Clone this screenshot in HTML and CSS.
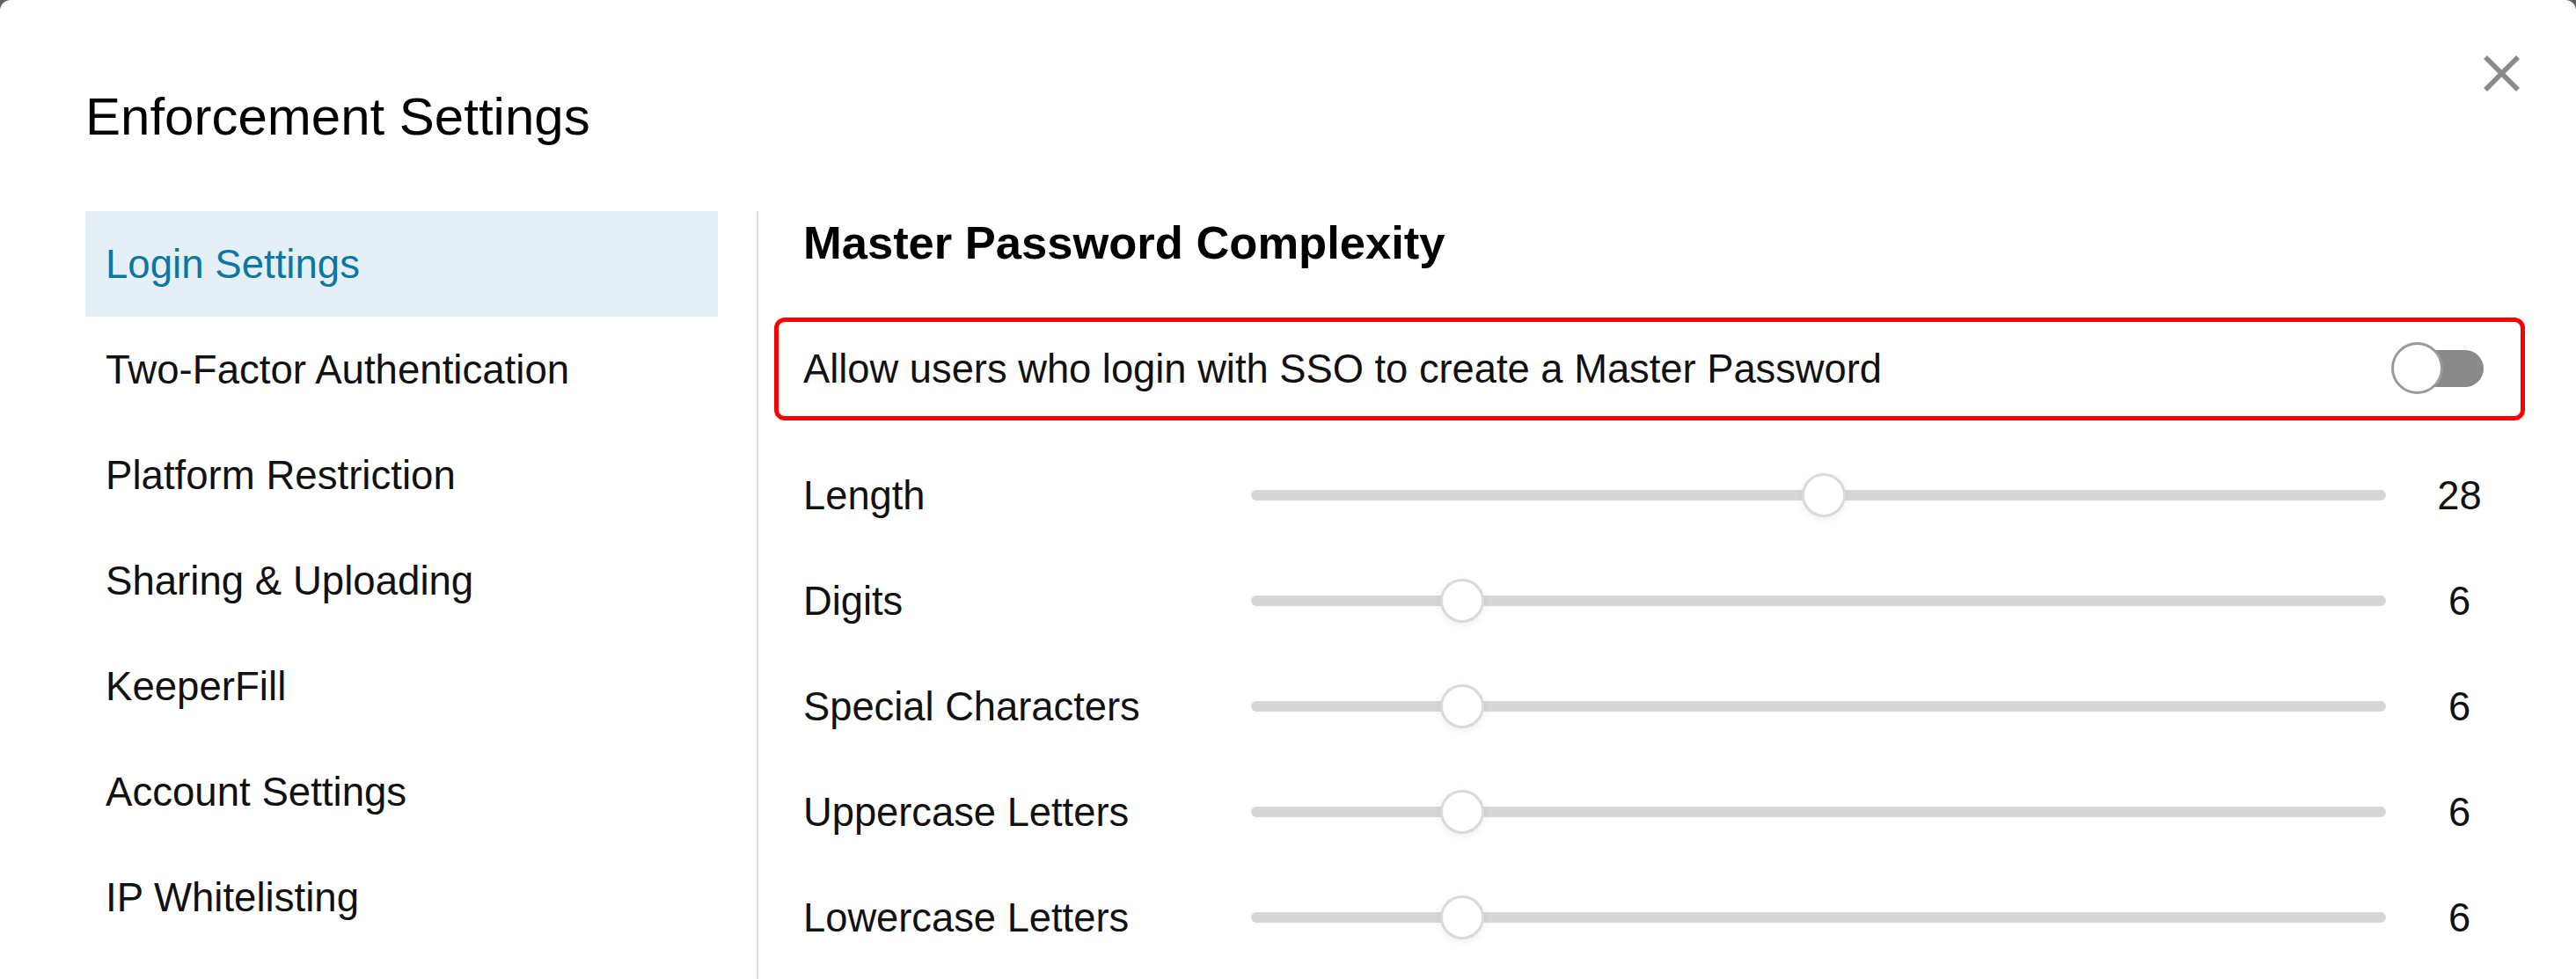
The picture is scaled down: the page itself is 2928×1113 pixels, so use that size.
FILE: index.html
```html
<!DOCTYPE html>
<html lang="en">
<head>
<meta charset="utf-8">
<title>Enforcement Settings</title>
<link rel="stylesheet" href="styles.css">
</head>
<body>
<div class="dialog">
  <button class="close" aria-label="Close">
    <svg viewBox="0 0 41 41" width="41" height="41"><line x1="2" y1="2" x2="39" y2="39"/><line x1="39" y1="2" x2="2" y2="39"/></svg>
  </button>
  <h1 class="title">Enforcement Settings</h1>
  <div class="main">
    <nav class="nav">
      <div class="nav-item active">Login Settings</div>
      <div class="nav-item">Two-Factor Authentication</div>
      <div class="nav-item">Platform Restriction</div>
      <div class="nav-item">Sharing &amp; Uploading</div>
      <div class="nav-item">KeeperFill</div>
      <div class="nav-item">Account Settings</div>
      <div class="nav-item">IP Whitelisting</div>
    </nav>
    <div class="divider"></div>
    <section class="panel">
      <h2 class="heading">Master Password Complexity</h2>
      <div class="sso-row">
        <span class="sso-label">Allow users who login with SSO to create a Master Password</span>
        <span class="toggle"><span class="toggle-track"></span><span class="toggle-knob"></span></span>
      </div>
      <div class="slider-row">
        <span class="label">Length</span>
        <span class="track"><span class="thumb" style="left: 50.5%"></span></span>
        <span class="value">28</span>
      </div>
      <div class="slider-row">
        <span class="label">Digits</span>
        <span class="track"><span class="thumb" style="left: 18.6%"></span></span>
        <span class="value">6</span>
      </div>
      <div class="slider-row">
        <span class="label">Special Characters</span>
        <span class="track"><span class="thumb" style="left: 18.6%"></span></span>
        <span class="value">6</span>
      </div>
      <div class="slider-row">
        <span class="label">Uppercase Letters</span>
        <span class="track"><span class="thumb" style="left: 18.6%"></span></span>
        <span class="value">6</span>
      </div>
      <div class="slider-row">
        <span class="label">Lowercase Letters</span>
        <span class="track"><span class="thumb" style="left: 18.6%"></span></span>
        <span class="value">6</span>
      </div>
    </section>
  </div>
</div>
</body>
</html>
```
FILE: styles.css
```css
* { box-sizing: border-box; }
html, body {
  margin: 0;
  padding: 0;
  background: #5e5e5e;
  overflow: hidden;
}
body {
  font-family: "Liberation Sans", Arial, Helvetica, sans-serif;
  color: #111;
}
.dialog {
  position: relative;
  width: 2928px;
  height: 1113px;
  background: #fff;
  border-radius: 12px 12px 0 0;
  overflow: hidden;
}
.close {
  position: absolute;
  left: 2823px;
  top: 63px;
  width: 41px;
  height: 41px;
  padding: 0;
  border: 0;
  background: none;
}
.close svg { display: block; }
.close line {
  stroke: #8a8a8a;
  stroke-width: 5.6;
}
.title {
  margin: 0;
  padding: 103px 0 0 97px;
  font-size: 60px;
  line-height: 59px;
  font-weight: 400;
  color: #000;
}
.main {
  display: flex;
  margin-top: 78px;
  height: 873px;
}
.nav {
  width: 719px;
  margin-left: 97px;
  display: flex;
  flex-direction: column;
}
.nav-item {
  height: 120px;
  display: flex;
  align-items: center;
  padding-left: 23px;
  font-size: 45.6px;
  line-height: 45px;
  color: #111;
}
.nav-item.active {
  background: #e4f0f6;
  color: #0b77a3;
}
.divider {
  width: 2px;
  margin-left: 44px;
  background: #dedede;
}
.panel {
  flex: 1;
  padding: 10px 0 0 18px;
}
.heading {
  margin: 0;
  padding-left: 33px;
  font-size: 52.5px;
  line-height: 52px;
  font-weight: 700;
  color: #000;
}
.sso-row {
  margin-top: 59px;
  width: 1990px;
  height: 117px;
  border: 5px solid #ff0000;
  border-radius: 12px;
  display: flex;
  align-items: center;
  justify-content: space-between;
  padding: 0 42px 0 28px;
}
.sso-label {
  font-size: 45.3px;
  line-height: 45px;
  color: #111;
}
.toggle {
  position: relative;
  width: 105px;
  height: 59px;
  margin-top: -2px;
}
.toggle-track {
  position: absolute;
  left: 6px;
  right: 0;
  top: 9px;
  height: 42px;
  border-radius: 21px;
  background: #8a8a8a;
}
.toggle-knob {
  position: absolute;
  left: 0;
  top: 0;
  width: 59px;
  height: 59px;
  border-radius: 50%;
  background: #fff;
  border: 3px solid #9a9a9a;
}
.slider-row {
  display: grid;
  grid-template-columns: 509px 1290px 167px;
  align-items: center;
  height: 120px;
  padding-left: 33px;
}
.sso-row + .slider-row { margin-top: 25px; }
.label {
  font-size: 45.3px;
  line-height: 45px;
  color: #111;
}
.track {
  position: relative;
  height: 12px;
  border-radius: 6px;
  background: #d7d7d7;
}
.thumb {
  position: absolute;
  top: 50%;
  width: 50px;
  height: 50px;
  border-radius: 50%;
  background: #fff;
  border: 3px solid #dadada;
  box-shadow: 0 2px 8px rgba(0, 0, 0, 0.08);
  transform: translate(-50%, -50%);
}
.value {
  text-align: center;
  font-size: 45.3px;
  line-height: 45px;
  color: #111;
}
```
